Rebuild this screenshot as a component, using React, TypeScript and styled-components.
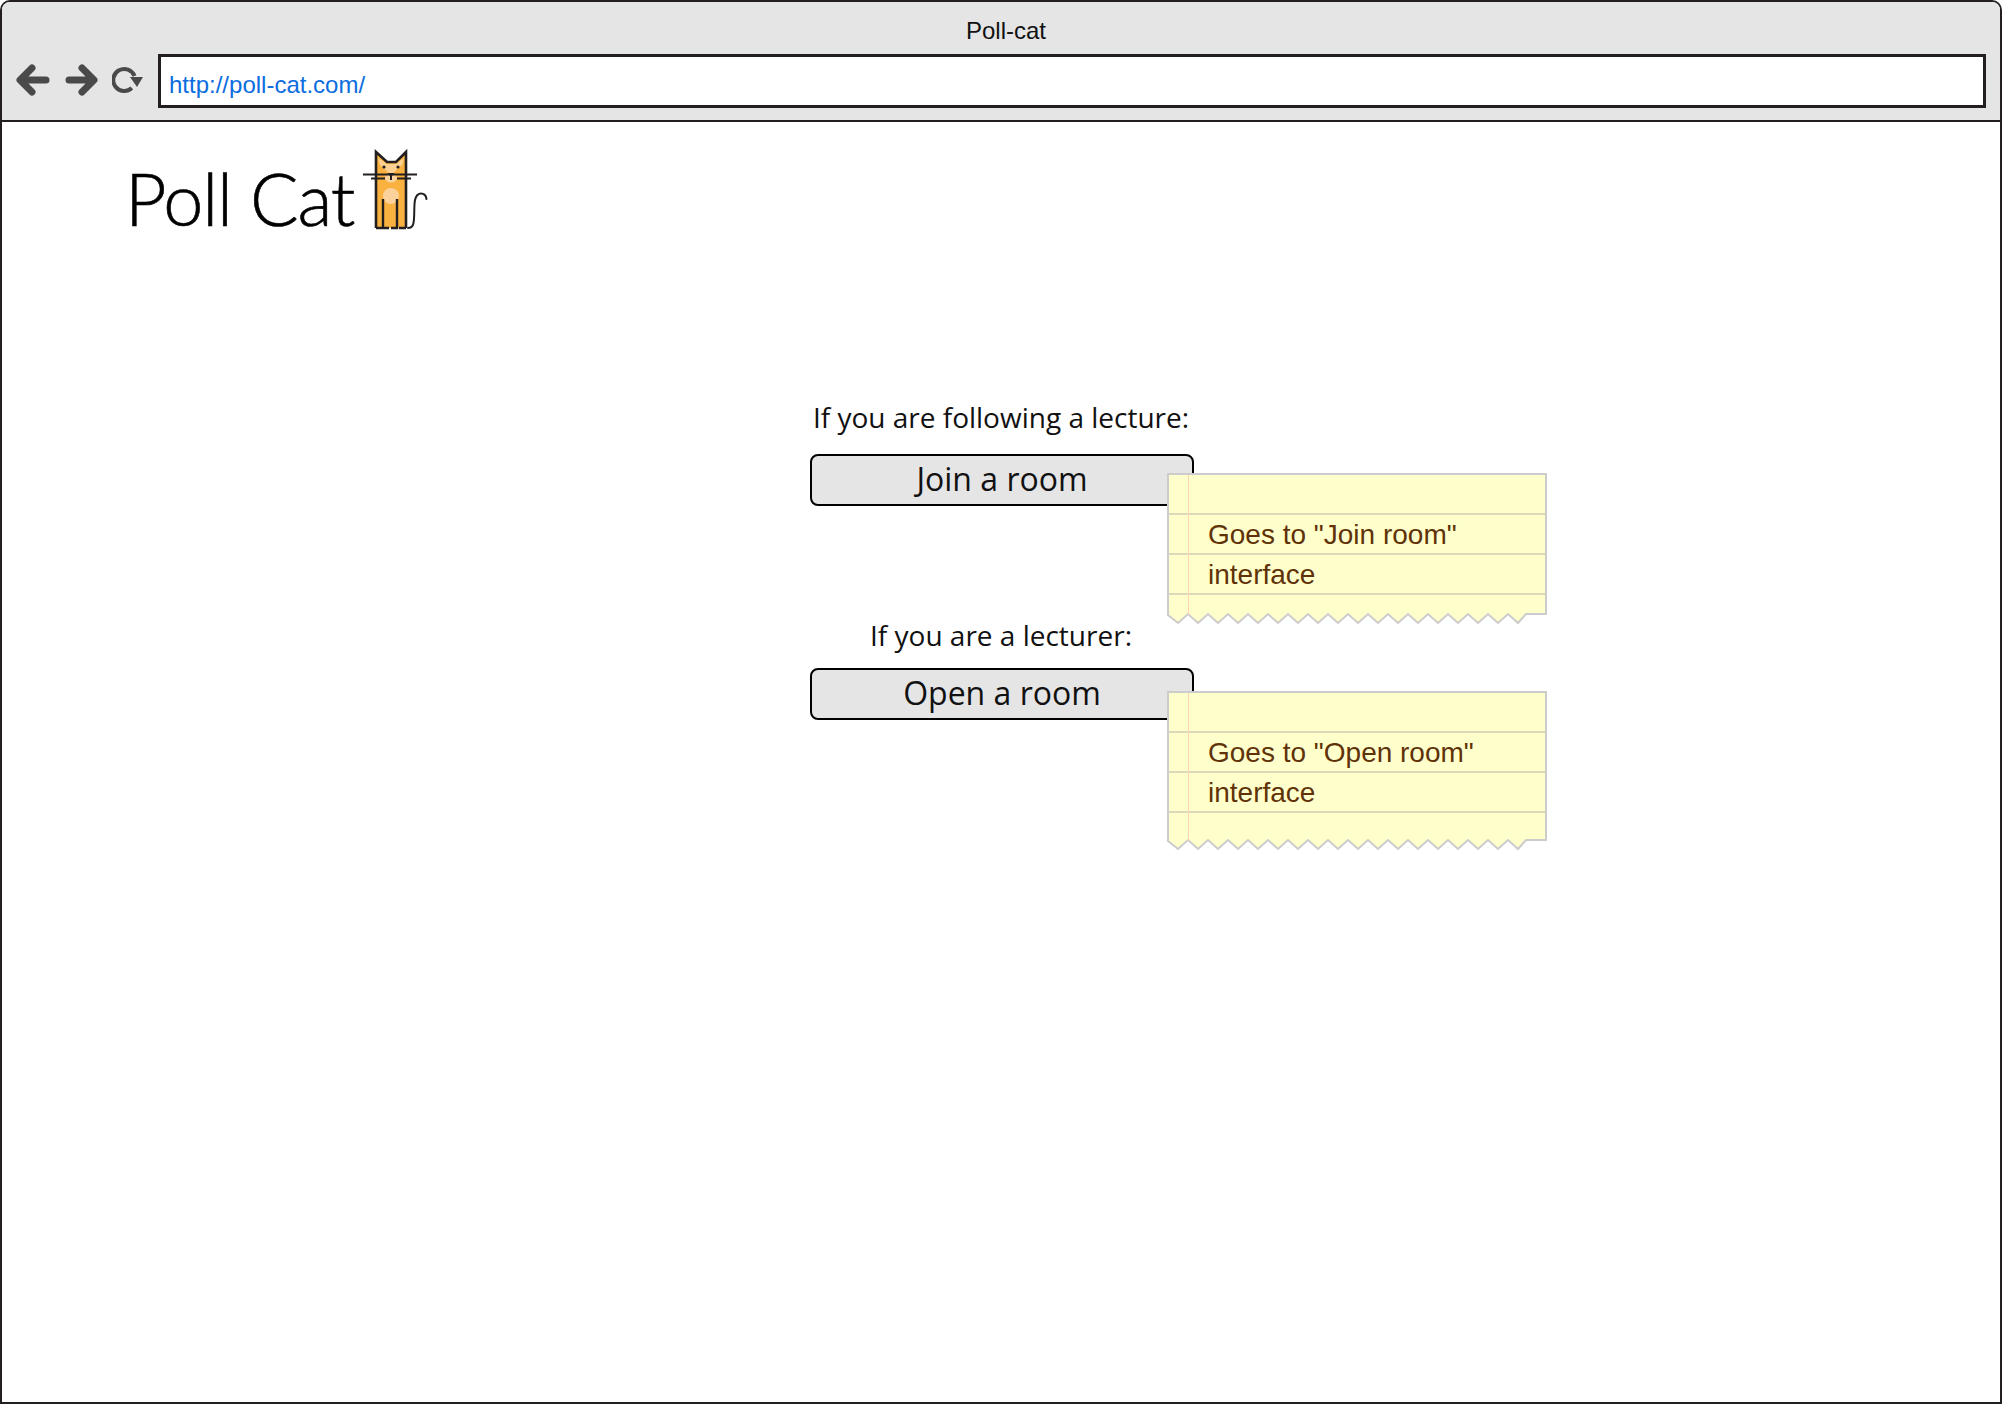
import React from 'react';
import styled, { createGlobalStyle } from 'styled-components';

const SANS = '"Liberation Sans", Arial, sans-serif';
const OPEN = '"Open Sans", "Noto Sans", sans-serif';

const GlobalStyle = createGlobalStyle`
  html, body {
    margin: 0;
    padding: 0;
    background: #fff;
  }
`;

const BrowserFrame = styled.div`
  box-sizing: border-box;
  width: 2002px;
  height: 1404px;
  border: 2px solid #231f20;
  border-radius: 10px 10px 0 0;
  overflow: hidden;
`;

const Chrome = styled.header`
  box-sizing: border-box;
  height: 120px;
  background: #e5e5e5;
  border-bottom: 2px solid #231f20;
`;

const WindowTitle = styled.div`
  padding: 15px 0 0 10px;
  height: 38px;
  box-sizing: border-box;
  text-align: center;
  font: 24px/28px ${SANS};
  color: #111;
`;

const NavRow = styled.div`
  display: flex;
  align-items: flex-start;
  padding: 14px 14px 0 13px;
`;

const NavIcon = styled.svg<{ $gap: number }>`
  display: block;
  flex: none;
  margin-top: 10px;
  margin-right: ${p => p.$gap}px;
`;

const AddressBar = styled.div`
  box-sizing: border-box;
  flex: 1;
  height: 54px;
  padding: 14px 0 0 8px;
  background: #fff;
  border: 3px solid #231f20;
  font: 24px/28px ${SANS};
  color: #0b6de0;
`;

const LogoRow = styled.div`
  display: flex;
  align-items: flex-start;
  height: 272px;
  padding: 26px 0 0 123px;
  box-sizing: border-box;
`;

const LogoText = styled.div`
  width: 237px;
  margin-top: 4px;
  font-family: Lato, sans-serif;
  font-weight: 300;
  font-size: 72px;
  line-height: 92px;
  letter-spacing: -1.2px;
  -webkit-text-stroke: 0.6px #000;
  color: #000;
`;

const CatMark = styled.svg`
  display: block;
`;

const Column = styled.main`
  width: 384px;
  margin-left: 808px;
`;

const Group = styled.section<{ $after: number }>`
  position: relative;
  margin-bottom: ${p => p.$after}px;
`;

const Label = styled.div<{ $pad: number }>`
  height: 60px;
  padding: ${p => p.$pad}px 2px 0 0;
  box-sizing: border-box;
  text-align: center;
  font: 28px/38px ${OPEN};
  color: #111;
`;

const RoomButton = styled.button`
  display: block;
  box-sizing: border-box;
  width: 384px;
  height: 52px;
  padding: 0 0 2px;
  background: #e5e5e5;
  border: 2px solid #000;
  border-radius: 8px;
  font: 32px/46px ${OPEN};
  color: #111;
`;

const Note = styled.aside<{ $top: number }>`
  position: absolute;
  left: 357px;
  top: ${p => p.$top}px;
  width: 380px;
  z-index: 2;
`;

const NoteBody = styled.div<{ $body: number }>`
  box-sizing: border-box;
  height: ${p => p.$body}px;
  padding: 40px 0 0 39px;
  border: 2px solid #cccccc;
  border-bottom: 0;
  background-color: #ffffcc;
  background-image:
    linear-gradient(to right, transparent 19px, #ffd2b8 19px, #ffd2b8 20px, transparent 20px),
    repeating-linear-gradient(to bottom, transparent 0, transparent 38px, #dcd9bb 38px, #dcd9bb 40px);
  background-size: 100% 100%, 100% 120px;
  background-repeat: no-repeat;
  font: 28px/40px ${SANS};
  color: #5f3208;
`;

const NoteTear = styled.svg`
  display: block;
  margin-top: -1px;
`;

const tearPath = () => {
  let d = 'M1 0 L1 3';
  let x = 1;
  let down = true;
  // teeth are about 20px wide, the last stretch on the right stays flat
  for (let i = 0; i < 35; i++) {
    x += 10;
    d += ` L${x} ${down ? 11 : 2}`;
    down = !down;
  }
  return `${d} L${x + 8} 2`;
};

const Tear = () => (
  <NoteTear width="380" height="13" viewBox="0 0 380 13">
    <path d={`${tearPath()} L379 2 L379 0 Z`} fill="#ffffcc" stroke="none" />
    <path d={`${tearPath()} L379 2 L379 0`} fill="none" stroke="#cccccc" strokeWidth="2" />
    <line x1="21.500" y1="0" x2="21.500" y2="3" stroke="#ffd2b8" />
  </NoteTear>
);

const BackIcon = () => (
  <NavIcon $gap={14} width="36" height="32" viewBox="0 0 36 32">
    <path d="M31 16H6M17 4L5 16l12 12" fill="none" stroke="#4a4a4a" strokeWidth="7" strokeLinecap="round" strokeLinejoin="round" />
  </NavIcon>
);

const ForwardIcon = () => (
  <NavIcon $gap={11} width="36" height="32" viewBox="0 0 36 32">
    <path d="M4 16h24M17 4l12 12-12 12" fill="none" stroke="#4a4a4a" strokeWidth="7" strokeLinecap="round" strokeLinejoin="round" />
  </NavIcon>
);

const ReloadIcon = () => (
  <NavIcon $gap={13} width="33" height="32" viewBox="0 0 33 32">
    <path d="M19.800 24A11 11 0 1 1 22.500 12" fill="none" stroke="#4a4a4a" strokeWidth="4" />
    <path d="M18 13h13l-6 10z" fill="#4a4a4a" />
  </NavIcon>
);

const Cat = () => (
  <CatMark width="68" height="84" viewBox="362 148 68 84">
    <path d="M376 152l11 10h9l10-10v76h-30z" fill="#f9b13f" />
    <path d="M378 158l9 6h9l8-6-2 7-11 10-11-10z" fill="#fcd9a6" opacity="0.8" />
    <ellipse cx="391" cy="196" rx="8" ry="8" fill="#fbd29b" />
    <ellipse cx="391" cy="178" rx="6" ry="4.500" fill="#fbd29b" />
    <path d="M376 228V152l11 10h9l10-10v76" fill="none" stroke="#231f20" strokeWidth="2.600" />
    <path d="M363 174.500h54M371 178.500h14M397 178.500h14" stroke="#231f20" strokeWidth="2" fill="none" />
    <circle cx="384" cy="167" r="1.600" fill="#231f20" />
    <circle cx="398" cy="167" r="1.600" fill="#231f20" />
    <path d="M387.500 173h7l-2.500 3v4h-2v-4z" fill="#231f20" />
    <path d="M376 228h6M383 199v29h6M397 199v29h-6M399 228h7" fill="none" stroke="#231f20" strokeWidth="2.400" />
    <path d="M408 228c4 0 5.500-2 6-9s0-14 1-19c1-4 3-6.500 6-6.500s5 2 5.500 5.500" fill="none" stroke="#231f20" strokeWidth="2" strokeLinecap="round" />
  </CatMark>
);

export default function App() {
  return (
    <>
      <GlobalStyle />
      <BrowserFrame>
        <Chrome>
          <WindowTitle>Poll-cat</WindowTitle>
          <NavRow>
            <BackIcon />
            <ForwardIcon />
            <ReloadIcon />
            <AddressBar>http://poll-cat.com/</AddressBar>
          </NavRow>
        </Chrome>
        <LogoRow>
          <LogoText>Poll Cat</LogoText>
          <Cat />
        </LogoRow>
        <Column>
          <Group $after={102}>
            <Label $pad={4}>If you are following a lecture:</Label>
            <RoomButton>Join a room</RoomButton>
            <Note $top={79}>
              <NoteBody $body={140}>
                Goes to "Join room"
                <br />
                interface
              </NoteBody>
              <Tear />
            </Note>
          </Group>
          <Group $after={0}>
            <Label $pad={8}>If you are a lecturer:</Label>
            <RoomButton>Open a room</RoomButton>
            <Note $top={83}>
              <NoteBody $body={148}>
                Goes to "Open room"
                <br />
                interface
              </NoteBody>
              <Tear />
            </Note>
          </Group>
        </Column>
      </BrowserFrame>
    </>
  );
}
